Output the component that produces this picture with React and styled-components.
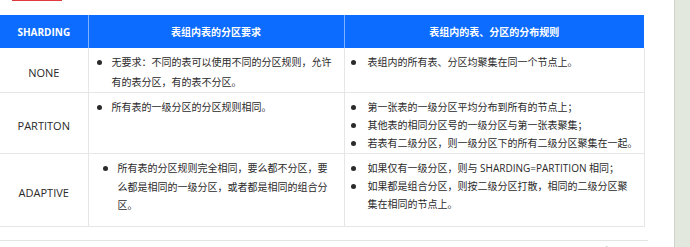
import React from "react";
import styled, { createGlobalStyle } from "styled-components";

const Global = createGlobalStyle`
  html, body { margin: 0; padding: 0; background: #fff; }
  body {
    font-family: "Open Sans", "Noto Sans CJK SC", sans-serif;
    color: #333;
    overflow: hidden;
  }
`;

const Page = styled.div`
  display: flex;
  width: 690px;
  height: 247px;
  overflow: hidden;
`;

const Main = styled.div`
  width: 674px;
  flex: none;
  background: #fff;
  display: flex;
  flex-direction: column;
`;

const Sidebar = styled.div`
  flex: 1;
  background: #e3e8df;
  border-left: 1px solid #cfd3cb;
`;

const LeadIn = styled.p`
  margin: -14px 0 0 0;
  padding-left: 12px;
  height: 19px;
  font-size: 10px;
  line-height: 19px;
  color: #333;
`;

const Marked = styled.span`
  text-decoration: underline;
  text-decoration-color: #e0393e;
  text-decoration-thickness: 1px;
  text-underline-offset: 1px;
`;

const Table = styled.table`
  margin-top: 10px;
  width: 644px;
  border-collapse: collapse;
  table-layout: fixed;
  font-size: 10px;
`;

const HeadCell = styled.th`
  background: #0b6cff;
  color: #fff;
  font-weight: 700;
  height: 33px;
  padding: 0 4px;
  text-align: center;
  vertical-align: middle;
  border-left: 1px solid #7fb0ff;
  &:first-child { border-left: none; }
  font-size: 10px;
`;

const Row = styled.tr`
  height: ${(p) => p.$h}px;
`;

const KeyCell = styled.td`
  text-align: center;
  vertical-align: middle;
  padding: 4px 0 0 0;
  border-bottom: 1px solid #e6e6e6;
  font-size: 11px;
  color: #2a2a2a;
`;

const ListCell = styled.td`
  vertical-align: top;
  padding: 5px 2px 0 ${(p) => p.$pad}px;
  border-left: 1px solid #e6e6e6;
  border-right: 1px solid #e6e6e6;
  border-bottom: 1px solid #e6e6e6;
`;

const List = styled.ul`
  list-style: none;
  margin: 0;
  padding: 0;
`;

const Item = styled.li`
  display: flex;
  align-items: flex-start;
  gap: ${(p) => p.$gap}px;
  line-height: ${(p) => p.$lh}px;
  font-size: 10px;
  color: #2a2a2a;
`;

const Dot = styled.span`
  flex: none;
  width: 5px;
  height: 5px;
  border-radius: 50%;
  background: #2a2a2a;
  margin-top: ${(p) => p.$lh / 2 - 2.5}px;
`;

const Text = styled.span`
  max-width: ${(p) => p.$w}px;
`;

const Footer = styled.div`
  width: 648px;
  margin-top: 13px;
  border-top: 1px solid #e3e3e3;
  padding-top: 3px;
  text-align: right;
  font-size: 9.5px;
  line-height: 12px;
  color: #a8a8a8;
`;

function Bullets({ items, gap, lh, w }) {
  return (
    <List>
      {items.map((t, i) => (
        <Item key={i} $gap={gap} $lh={lh}>
          <Dot $lh={lh} />
          <Text $w={w}>{t}</Text>
        </Item>
      ))}
    </List>
  );
}

const rows = [
  {
    key: "NONE",
    h: 43,
    leftPad: 8,
    leftW: 224,
    left: ["无要求：不同的表可以使用不同的分区规则，允许有的表分区，有的表不分区。"],
    leftLh: 19.5,
    rightW: 272,
    right: ["表组内的所有表、分区均聚集在同一个节点上。"],
  },
  {
    key: "PARTITON",
    h: 61,
    leftPad: 8,
    leftW: 224,
    left: ["所有表的一级分区的分区规则相同。"],
    leftLh: 18,
    rightW: 272,
    right: [
      "第一张表的一级分区平均分布到所有的节点上；",
      "其他表的相同分区号的一级分区与第一张表聚集；",
      "若表有二级分区，则一级分区下的所有二级分区聚集在一起。",
    ],
  },
  {
    key: "ADAPTIVE",
    h: 73,
    leftPad: 14,
    leftW: 212,
    left: ["所有表的分区规则完全相同，要么都不分区，要么都是相同的一级分区，或者都是相同的组合分区。"],
    leftLh: 18.5,
    rightW: 265,
    right: [
      "如果仅有一级分区，则与 SHARDING=PARTITION 相同；",
      "如果都是组合分区，则按二级分区打散，相同的二级分区聚集在相同的节点上。",
    ],
  },
];

export default function App() {
  return (
    <>
      <Global />
      <Page>
        <Main>
          <LeadIn>
            <Marked>分区的流程</Marked>。
          </LeadIn>
          <Table>
            <colgroup>
              <col style={{ width: 88 }} />
              <col style={{ width: 256 }} />
              <col style={{ width: 300 }} />
            </colgroup>
            <thead>
              <tr>
                <HeadCell>SHARDING</HeadCell>
                <HeadCell>表组内表的分区要求</HeadCell>
                <HeadCell>表组内的表、分区的分布规则</HeadCell>
              </tr>
            </thead>
            <tbody>
              {rows.map((r) => (
                <Row key={r.key} $h={r.h}>
                  <KeyCell>{r.key}</KeyCell>
                  <ListCell $pad={r.leftPad}>
                    <Bullets items={r.left} gap={10} lh={r.leftLh} w={r.leftW} />
                  </ListCell>
                  <ListCell $pad={6}>
                    <Bullets items={r.right} gap={12} lh={18} w={r.rightW} />
                  </ListCell>
                </Row>
              ))}
            </tbody>
          </Table>
          <Footer>www.oceanbase.com</Footer>
        </Main>
        <Sidebar />
      </Page>
    </>
  );
}
